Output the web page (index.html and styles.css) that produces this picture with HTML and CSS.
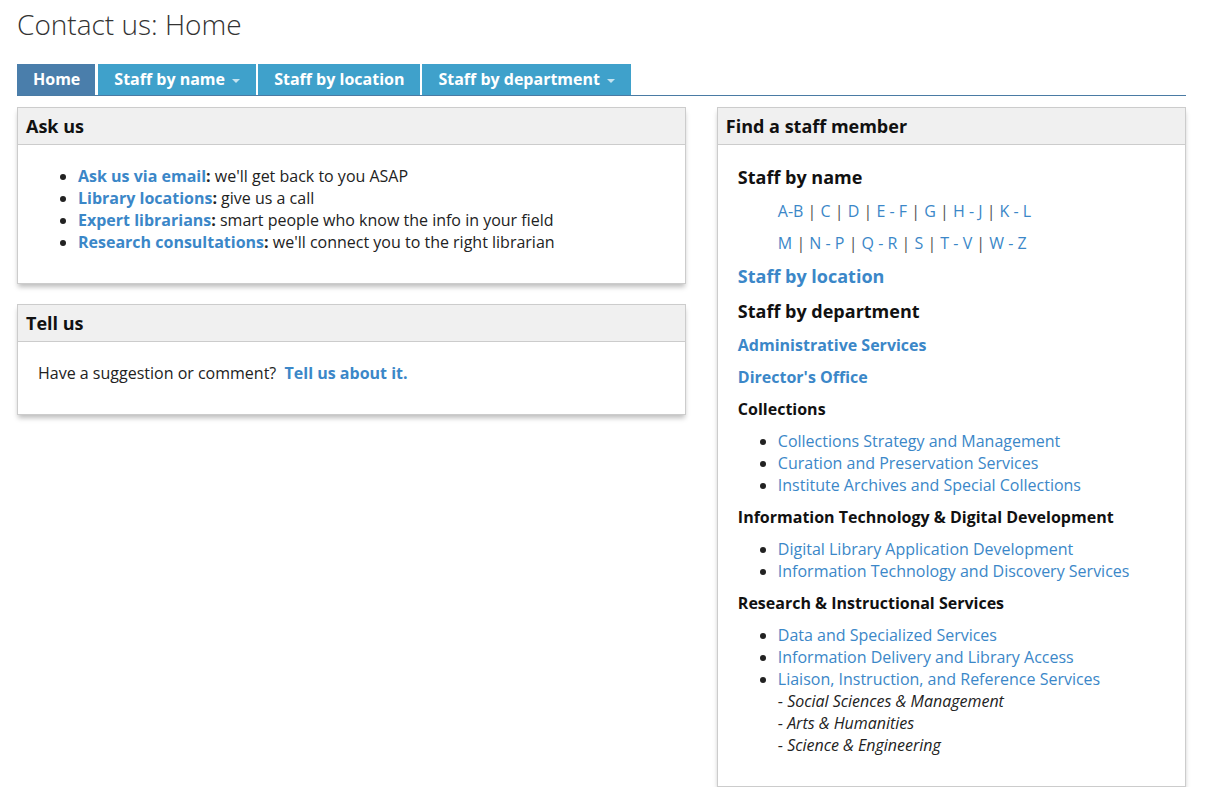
FILE: index.html
```html
<!DOCTYPE html>
<html lang="en">
<head>
<meta charset="utf-8">
<title>Contact us: Home</title>
<link rel="stylesheet" href="styles.css">
</head>
<body>
<div class="page">
  <h1 class="page-title">Contact us: Home</h1>
  <ul class="tabs">
    <li class="tab active"><a href="#">Home</a></li>
    <li class="tab"><a href="#">Staff by name <span class="caret"></span></a></li>
    <li class="tab"><a href="#">Staff by location</a></li>
    <li class="tab"><a href="#">Staff by department <span class="caret"></span></a></li>
  </ul>
  <div class="columns">
    <div class="col-left">
      <section class="panel">
        <h2 class="panel-heading">Ask us</h2>
        <div class="panel-body">
          <ul class="bullets">
            <li><strong class="lead"><a href="#">Ask us via email</a>:</strong> we'll get back to you ASAP</li>
            <li><strong class="lead"><a href="#">Library locations</a>:</strong> give us a call</li>
            <li><strong class="lead"><a href="#">Expert librarians</a>:</strong> smart people who know the info in your field</li>
            <li><strong class="lead"><a href="#">Research consultations</a>:</strong> we'll connect you to the right librarian</li>
          </ul>
        </div>
      </section>
      <section class="panel">
        <h2 class="panel-heading">Tell us</h2>
        <div class="panel-body">
          <p class="para">Have a suggestion or comment?&nbsp; <a href="#" class="strong-link">Tell us about it.</a></p>
        </div>
      </section>
    </div>
    <div class="col-right">
      <section class="panel">
        <h2 class="panel-heading">Find a staff member</h2>
        <div class="panel-body">
          <h3 class="h-large">Staff by name</h3>
          <p class="letters"><a href="#">A-B</a> <span class="sep">|</span> <a href="#">C</a> <span class="sep">|</span> <a href="#">D</a> <span class="sep">|</span> <a href="#">E - F</a> <span class="sep">|</span> <a href="#">G</a> <span class="sep">|</span> <a href="#">H - J</a> <span class="sep">|</span> <a href="#">K - L</a></p>
          <p class="letters"><a href="#">M</a> <span class="sep">|</span> <a href="#">N - P</a> <span class="sep">|</span> <a href="#">Q - R</a> <span class="sep">|</span> <a href="#">S</a> <span class="sep">|</span> <a href="#">T - V</a> <span class="sep">|</span> <a href="#">W - Z</a></p>
          <h3 class="h-large"><a href="#" class="strong-link">Staff by location</a></h3>
          <h3 class="h-large">Staff by department</h3>
          <h4 class="h-small"><a href="#" class="strong-link">Administrative Services</a></h4>
          <h4 class="h-small"><a href="#" class="strong-link">Director's Office</a></h4>
          <h4 class="h-small">Collections</h4>
          <ul class="bullets">
            <li><a href="#">Collections Strategy and Management</a></li>
            <li><a href="#">Curation and Preservation Services</a></li>
            <li><a href="#">Institute Archives and Special Collections</a></li>
          </ul>
          <h4 class="h-small">Information Technology &amp; Digital Development</h4>
          <ul class="bullets">
            <li><a href="#">Digital Library Application Development</a></li>
            <li><a href="#">Information Technology and Discovery Services</a></li>
          </ul>
          <h4 class="h-small">Research &amp; Instructional Services</h4>
          <ul class="bullets">
            <li><a href="#">Data and Specialized Services</a></li>
            <li><a href="#">Information Delivery and Library Access</a></li>
            <li><a href="#">Liaison, Instruction, and Reference Services</a>
              <div class="sub">- <em>Social Sciences &amp; Management</em></div>
              <div class="sub">- <em>Arts &amp; Humanities</em></div>
              <div class="sub">- <em>Science &amp; Engineering</em></div>
            </li>
          </ul>
        </div>
      </section>
    </div>
  </div>
</div>
</body>
</html>
```

FILE: styles.css
```css
* { box-sizing: border-box; }

body {
  margin: 0;
  background: #fff;
  color: #222;
  font-family: "Open Sans", "Noto Sans", sans-serif;
  font-size: 16px;
  line-height: 22px;
}

a { color: #3b87c8; text-decoration: none; }

.page {
  width: 1169px;
  margin-left: 17px;
}

.page-title {
  margin: 7px 0 23px;
  font-size: 28px;
  line-height: 34px;
  font-weight: 300;
  color: #333;
}

.tabs {
  display: flex;
  gap: 2px;
  list-style: none;
  margin: 0 0 11px;
  padding: 0;
  border-bottom: 1px solid #4a7ba4;
}

.tab a {
  display: block;
  height: 31px;
  padding: 0 16px;
  line-height: 31px;
  background: #3fa1cb;
  color: #fff;
  font-weight: 700;
  font-size: 16px;
}

.tab.active { margin-right: 1px; }
.tab.active a { background: #4a7eab; padding: 0 15px 0 16px; }

.caret {
  display: inline-block;
  width: 0;
  height: 0;
  margin-left: 3px;
  vertical-align: middle;
  border-top: 4px solid rgba(255,255,255,0.7);
  border-left: 4px solid transparent;
  border-right: 4px solid transparent;
}

.columns {
  display: flex;
  gap: 31px;
  align-items: flex-start;
}

.col-left { width: 670px; display: flex; flex-direction: column; gap: 20px; }
.col-right { width: 470px; }

.panel {
  border: 1px solid #ccc;
  background: #fff;
  box-shadow: 0 4px 5px -1px rgba(0,0,0,0.26);
}

.panel-heading {
  margin: 0;
  padding: 7px 8px 7px;
  background: #f0f0f0;
  border-bottom: 1px solid #ccc;
  font-size: 18px;
  line-height: 22px;
  font-weight: 700;
  color: #111;
}

.panel-body {
  padding: 20px;
}

.bullets {
  margin: 0 0 10px;
  padding-left: 40px;
}

.para { margin: 0 0 10px; }

.lead { font-weight: 700; color: #222; }
.strong-link { font-weight: 700; }

.h-large {
  margin: 0 0 11px;
  font-size: 18px;
  line-height: 24px;
  font-weight: 700;
  color: #111;
}

.h-small {
  margin: 0 0 10px;
  font-size: 16px;
  line-height: 22px;
  font-weight: 700;
  color: #111;
}

.letters {
  margin: 0 0 10px;
  padding-left: 40px;
}

.sep { color: #555; }

.sub { color: #222; }
.sub em { font-style: italic; }
```
